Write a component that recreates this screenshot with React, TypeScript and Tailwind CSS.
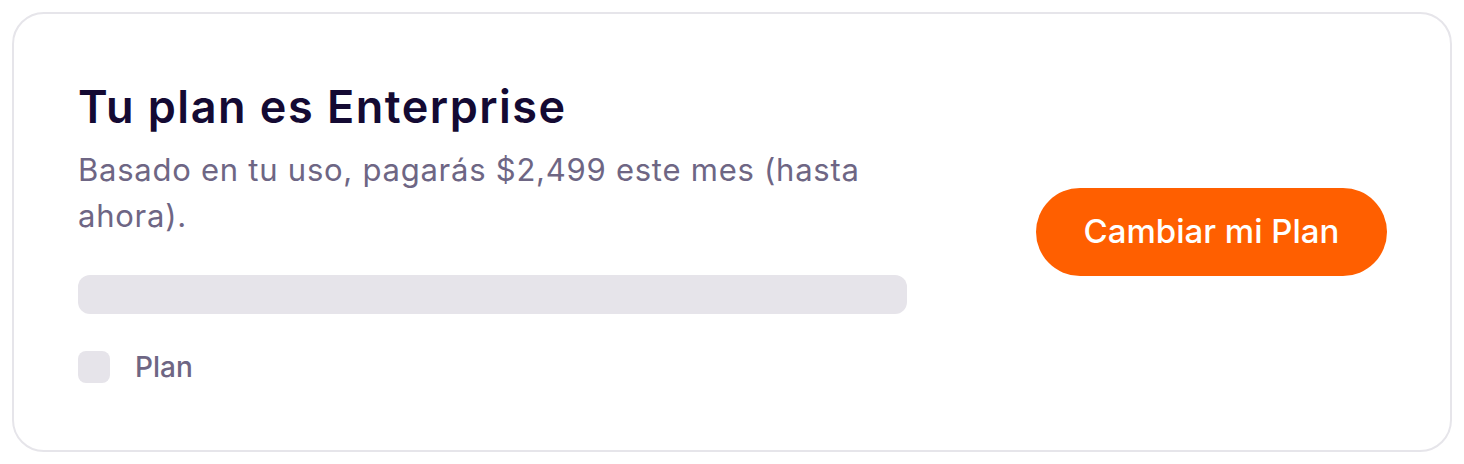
export default function App() {
  return (
    <div className="w-[1464px] h-[464px] bg-white p-[12px] box-border" style={{ fontFamily: 'Inter, "Noto Sans", sans-serif' }}>
      <div className="h-[440px] box-border rounded-[32px] border-2 border-[#e6e5ea] bg-white pl-[64px] pr-[63px] flex items-center justify-between">
        <div className="w-[829px] flex flex-col">
          <h1 className="text-[45px] leading-[52px] font-semibold text-[#140a33] tracking-[1.5px]">Tu plan es Enterprise</h1>
          <p className="mt-[14px] text-[31px] leading-[46px] text-[#6e6684] tracking-[0.75px] w-[829px]">Basado en tu uso, pagarás $2,499 este mes (hasta ahora).</p>
          <div className="mt-[36px] h-[39px] rounded-[12px] bg-[#e6e4ea]" />
          <div className="mt-[37px] flex items-center gap-[25px]">
            <div className="w-[32px] h-[32px] rounded-[8px] bg-[#e6e4ea]" />
            <span className="text-[28px] leading-[32px] font-medium text-[#6e6684]">Plan</span>
          </div>
        </div>
        <button className="w-[351px] h-[88px] rounded-full bg-[#ff5f00] text-white text-[33px] font-medium">Cambiar mi Plan</button>
      </div>
    </div>
  );
}
